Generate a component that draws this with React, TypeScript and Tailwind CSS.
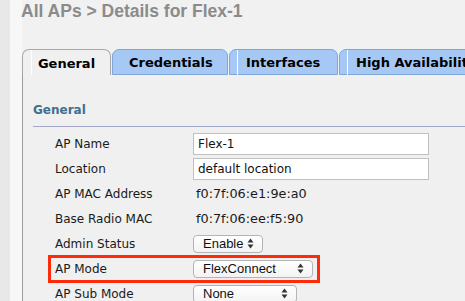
import React from "react";

const rows: { label: string; kind: "input" | "text" | "select"; value: string; width?: number }[] = [
  { label: "AP Name", kind: "input", value: "Flex-1" },
  { label: "Location", kind: "input", value: "default location" },
  { label: "AP MAC Address", kind: "text", value: "f0:7f:06:e1:9e:a0" },
  { label: "Base Radio MAC", kind: "text", value: "f0:7f:06:ee:f5:90" },
  { label: "Admin Status", kind: "select", value: "Enable", width: 70 },
  { label: "AP Mode", kind: "select", value: "FlexConnect", width: 120 },
  { label: "AP Sub Mode", kind: "select", value: "None", width: 104 },
];

const tabs = [
  { name: "General", width: 89, active: true },
  { name: "Credentials", width: 116 },
  { name: "Interfaces", width: 109 },
  { name: "High Availability", width: 140 },
];

const Arrows: React.FC = () => (
  <svg width="7" height="11" viewBox="0 0 7 11" className="shrink-0">
    <path d="M3.5 0.5 L6.5 4.5 L0.5 4.5 Z" fill="#333" />
    <path d="M3.5 10.5 L6.5 6.5 L0.5 6.5 Z" fill="#333" />
  </svg>
);

const Select: React.FC<{ value: string; width: number }> = ({ value, width }) => (
  <div
    className="flex h-[18px] items-center justify-between rounded-[4px] border border-[#b4b4b4] bg-gradient-to-b from-white to-[#f3f3f3] pl-[9px] pr-[8px] text-[13px] text-[#111]"
    style={{ width, fontFamily: '"Liberation Sans", Arial, sans-serif' }}
  >
    <span className="leading-none">{value}</span>
    <Arrows />
  </div>
);

export default function App() {
  return (
    <div
      className="flex h-[301px] w-[465px] overflow-hidden bg-[#f1f1f1]"
      style={{ fontFamily: '"DejaVu Sans", Verdana, sans-serif' }}
    >
      <div className="w-[10px] shrink-0 bg-[#e8e8e8]" />
      <div className="w-[12px] shrink-0 bg-[#f7f7f7]" />
      <div className="flex min-w-0 flex-1 flex-col">
        <h1
          className="-ml-[1px] h-[49px] shrink-0 pt-[1px] text-[17.5px] font-bold leading-[20px] text-[#8b8b8b] whitespace-nowrap"
          style={{ fontFamily: '"Liberation Sans", Arial, sans-serif' }}
        >
          All APs &gt; Details for Flex-1
        </h1>

        {/* tab strip */}
        <div className="flex h-[26px] shrink-0 gap-[1px] overflow-hidden whitespace-nowrap">
          {tabs.map((t) =>
            t.active ? (
              <div
                key={t.name}
                className="relative -mb-[1px] flex shrink-0 items-center justify-center rounded-t-[7px] border border-b-0 border-[#a8a8a8] bg-[#f0f0f0] pt-[1px] text-[13px] font-bold text-black"
                style={{ width: t.width }}
              >
                <span className="absolute left-[8px] top-0 h-[25px] w-px bg-white" />
                {t.name}
              </div>
            ) : (
              <div
                key={t.name}
                className="relative flex shrink-0 items-center rounded-t-[7px] border border-[#7ea6d8] bg-[#a5c9f4] pl-[16px] pt-[1px] text-[13px] font-bold text-black"
                style={{ width: t.width }}
              >
                {t.name !== "Credentials" && (
                  <span className="absolute left-[7px] top-0 h-[25px] w-px bg-white" />
                )}
                {t.name}
              </div>
            )
          )}
        </div>

        {/* panel */}
        <div className="flex-1 border-l border-[#9c9c9c] bg-[#f0f0f0] pl-[10px]">
          <div className="mt-[26px] border-b border-[#a4a8cc] pb-[7px] text-[12px] font-bold leading-[18px] text-[#3f6f8f]">
            General
          </div>
          <div className="mt-[4px] flex flex-col pl-[22px] text-[12px] text-[#1a1a1a]">
            {rows.map((r) => (
              <div key={r.label} className="relative flex h-[25px] shrink-0 items-center">
                {r.label === "AP Mode" && (
                  <span className="absolute -left-[7px] -top-[1px] h-[28px] w-[272px] border-[3px] border-[#ff2a0a]" />
                )}
                <span className="w-[138px] shrink-0 whitespace-nowrap">{r.label}</span>
                {r.kind === "input" && (
                  <div className="flex h-[22px] w-[236px] items-center border border-[#c0c0c0] bg-white pl-[4px] text-[12px] text-[#111]">
                    {r.value}
                  </div>
                )}
                {r.kind === "text" && (
                  <span className="pl-[3px] text-[12.8px] text-[#1a1a1a]">{r.value}</span>
                )}
                {r.kind === "select" && <Select value={r.value} width={r.width!} />}
              </div>
            ))}
          </div>
        </div>
      </div>
    </div>
  );
}
